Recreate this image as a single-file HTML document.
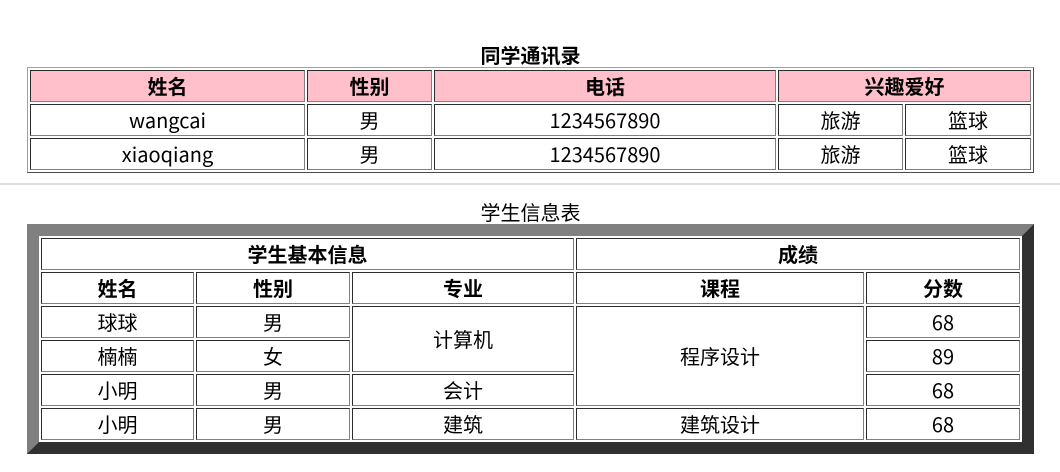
<!DOCTYPE html>
<html><head><meta charset="utf-8"><style>
body{margin:0;background:#fff;font-family:"Noto Sans CJK SC","Liberation Sans",sans-serif;font-size:20px;color:#000}
table{position:absolute;left:27px;border-collapse:separate;border-spacing:2px;table-layout:fixed;width:1007px}
td,th{padding:0;height:32px;line-height:30px;text-align:center;border:1px inset #808080;box-sizing:border-box}
th{font-weight:bold}
caption{line-height:24px}
#t1{top:43px;border:1px outset #a0a0a0}
#t1 caption{font-weight:bold}
#t1 th{background:#ffc0cb}
#t2{top:200px;border:12px solid;border-color:#808080 #303030 #303030 #808080}
hr{position:absolute;top:183px;left:0;width:1060px;margin:0;border:0;border-top:2px solid #ddd;height:0}
</style></head><body>
<table id="t1"><caption>同学通讯录</caption>
<colgroup><col style="width:275px"><col style="width:125px"><col style="width:342px"><col style="width:125px"><col style="width:126px"></colgroup>
<tr><th>姓名</th><th>性别</th><th>电话</th><th colspan="2">兴趣爱好</th></tr>
<tr><td>wangcai</td><td>男</td><td>1234567890</td><td>旅游</td><td>篮球</td></tr>
<tr><td>xiaoqiang</td><td>男</td><td>1234567890</td><td>旅游</td><td>篮球</td></tr>
</table>
<hr>
<table id="t2"><caption>学生信息表</caption>
<colgroup><col style="width:153px"><col style="width:154px"><col style="width:222px"><col style="width:288px"><col style="width:154px"></colgroup>
<tr><th colspan="3">学生基本信息</th><th colspan="2">成绩</th></tr>
<tr><th>姓名</th><th>性别</th><th>专业</th><th>课程</th><th>分数</th></tr>
<tr><td>球球</td><td>男</td><td rowspan="2">计算机</td><td rowspan="3">程序设计</td><td>68</td></tr>
<tr><td>楠楠</td><td>女</td><td>89</td></tr>
<tr><td>小明</td><td>男</td><td>会计</td><td>68</td></tr>
<tr><td>小明</td><td>男</td><td>建筑</td><td>建筑设计</td><td>68</td></tr>
</table>
</body></html>
